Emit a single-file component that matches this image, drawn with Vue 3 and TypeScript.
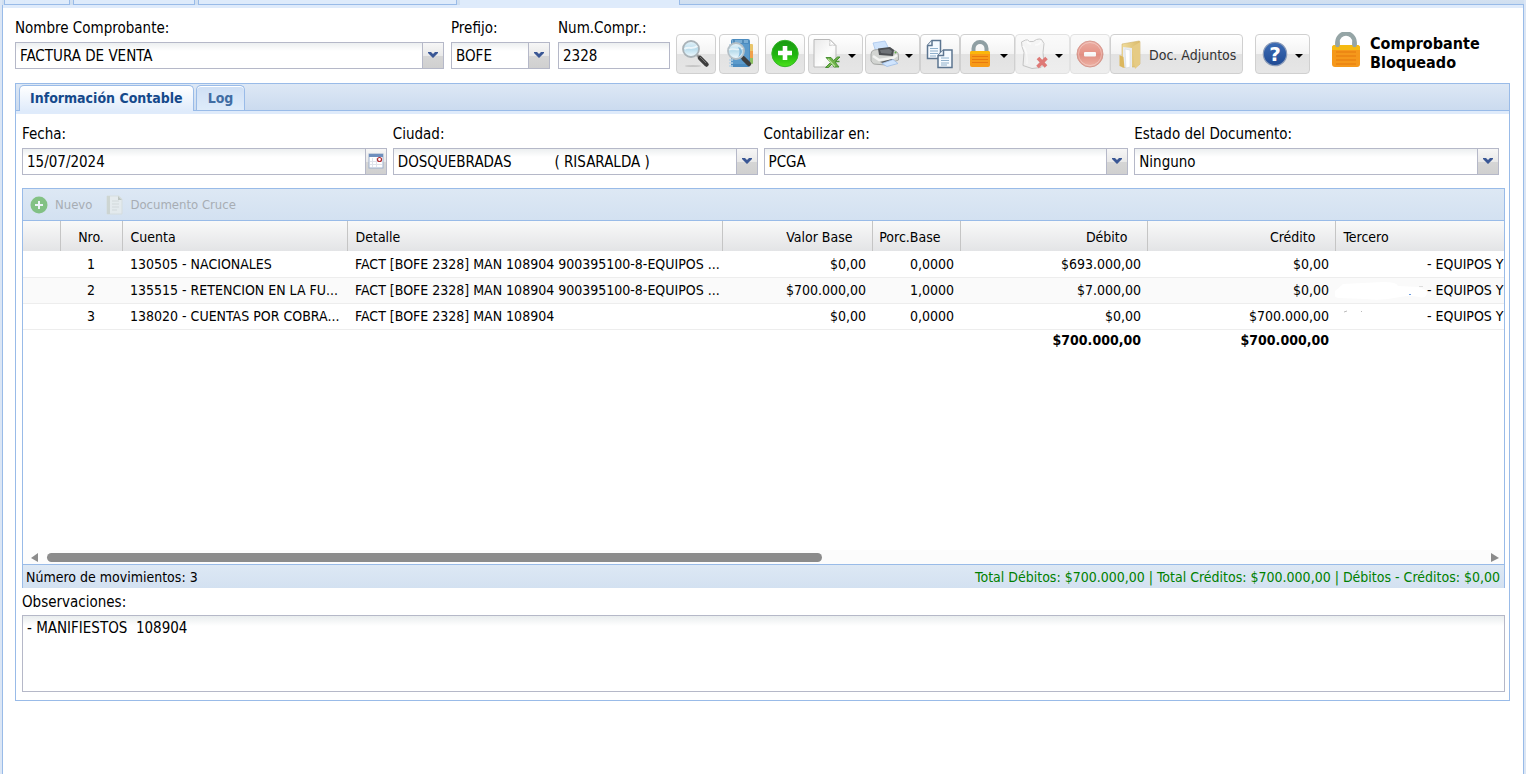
<script setup lang="ts">
import { ref } from 'vue'

interface Movimiento {
  nro: number
  cuenta: string
  detalle: string
  base: string
  porc: string
  debito: string
  credito: string
  tercero: string
}

interface Campo {
  id: string
  label: string
  value: string
}

const movimientos: Movimiento[] = [
  { nro: 1, cuenta: '130505 - NACIONALES', detalle: 'FACT [BOFE 2328] MAN 108904 900395100-8-EQUIPOS ...', base: '$0,00', porc: '0,0000', debito: '$693.000,00', credito: '$0,00', tercero: '- EQUIPOS Y' },
  { nro: 2, cuenta: '135515 - RETENCION EN LA FU...', detalle: 'FACT [BOFE 2328] MAN 108904 900395100-8-EQUIPOS ...', base: '$700.000,00', porc: '1,0000', debito: '$7.000,00', credito: '$0,00', tercero: '- EQUIPOS Y' },
  { nro: 3, cuenta: '138020 - CUENTAS POR COBRA...', detalle: 'FACT [BOFE 2328] MAN 108904', base: '$0,00', porc: '0,0000', debito: '$0,00', credito: '$700.000,00', tercero: '- EQUIPOS Y' },
]

const listas: Campo[] = [
  { id: 'ciudad', label: 'Ciudad:', value: 'DOSQUEBRADAS' + '\u00a0'.repeat(10) + '( RISARALDA )' },
  { id: 'contabilizar', label: 'Contabilizar en:', value: 'PCGA' },
  { id: 'estado', label: 'Estado del Documento:', value: 'Ninguno' },
]

const numero = ref('2328')
const fecha = ref('15/07/2024')
const observaciones = ref('- MANIFIESTOS  108904')
</script>

<template>
  <div class="page">
    <div class="outer-tabs" aria-hidden="true">
      <i class="ot a"></i><i class="ot b"></i><i class="ot c"></i><i class="ot on"></i><i class="ot rest"></i>
    </div>
    <main class="sheet">
      <header class="head">
        <div class="field grow">
          <label for="nombre">Nombre Comprobante:</label>
          <div class="combo">
            <select id="nombre"><option>FACTURA DE VENTA</option></select>
            <span class="trigger"><svg width="12" height="8" viewBox="0 0 12 8"><path d="M1 1h3l2 2 2-2h3v1L6 7 1 2z" fill="#3a5795" /></svg></span>
          </div>
        </div>
        <div class="field prefijo">
          <label for="prefijo">Prefijo:</label>
          <div class="combo">
            <select id="prefijo"><option>BOFE</option></select>
            <span class="trigger"><svg width="12" height="8" viewBox="0 0 12 8"><path d="M1 1h3l2 2 2-2h3v1L6 7 1 2z" fill="#3a5795" /></svg></span>
          </div>
        </div>
        <div class="field numero">
          <label for="numero">Num.Compr.:</label>
          <input id="numero" v-model="numero" class="box" type="text" />
        </div>

        <div class="tools">
          <button type="button" class="tool g3" aria-label="Buscar">
            <svg width="32" height="32" viewBox="0 0 32 32">
              <defs>
                <linearGradient id="lens" x1="0" y1="0" x2="0" y2="1"><stop offset="0" stop-color="#e8f5fb" /><stop offset=".5" stop-color="#b9dcec" /><stop offset="1" stop-color="#f2fbff" /></linearGradient>
              </defs>
              <ellipse cx="13" cy="28" rx="8" ry="1" fill="#000" opacity=".13" />
              <path d="M17 17l3 3" stroke="#999" stroke-width="2.500" />
              <path d="M20 20l6.500 6.500" stroke="#3d3d3d" stroke-width="4.500" stroke-linecap="round" />
              <path d="M20 19l6 6" stroke="#777" stroke-width="1" />
              <circle cx="11" cy="11" r="8" fill="url(#lens)" stroke="#a9b2b7" stroke-width="1.800" />
              <path d="M4.500 11c3-3 8 1 13-3" stroke="#fff" stroke-width="2" fill="none" opacity=".7" />
            </svg>
          </button>
          <button type="button" class="tool g6" aria-label="Buscar en libro">
            <svg width="32" height="32" viewBox="0 0 32 32">
              <path d="M25 6h4q1 0 1 1v6h-5z" fill="#e9c56a" /><path d="M25 13h5v7h-5z" fill="#f0a04a" /><path d="M25 20h5v5q0 1-1 1h-4z" fill="#8dc063" />
              <path d="M8 3q0-2 2-2h15q2 0 2 2v24q0 2-2 2H8z" fill="#4c8cc0" />
              <path d="M9 2h16v3H9z" fill="#79aed6" /><path d="M8 6h18v20H8z" fill="#5b9acb" />
              <path d="M11 2v3M20 2v3" stroke="#2f6b9c" />
              <path d="M6 22h4M6 25h4M6 28h4M6 7h3" stroke="#b9d2e5" stroke-width="1.500" />
              <path d="M18 18l2 2" stroke="#999" stroke-width="2.500" />
              <path d="M20.500 20.500l5.500 5.500" stroke="#3d3d3d" stroke-width="4.500" stroke-linecap="round" />
              <circle cx="13" cy="13" r="8" fill="url(#lens)" stroke="#b4bfc6" stroke-width="1.800" />
              <path d="M6 12c4-3 9 2 14-2" stroke="#fff" stroke-width="1.500" fill="none" opacity=".6" />
              <path d="M15 9q4 1 4 5-1 4-4 5 3-5 0-10" fill="#82b8dc" />
            </svg>
          </button>
          <button type="button" class="tool g3" aria-label="Agregar">
            <svg width="32" height="32" viewBox="0 0 32 32">
              <defs><linearGradient id="gr" x1="0" y1="0" x2="0" y2="1"><stop offset="0" stop-color="#1a9a12" /><stop offset=".55" stop-color="#1fb50f" /><stop offset="1" stop-color="#4be31b" /></linearGradient></defs>
              <circle cx="16" cy="15.500" r="13.200" fill="url(#gr)" stroke="#36b52a" stroke-width="1" />
              <path d="M16 8v14M9 15h14" stroke="#fff" stroke-width="4.600" />
            </svg>
          </button>
          <button type="button" class="tool split g2" aria-label="Exportar a Excel">
            <svg width="32" height="32" viewBox="0 0 32 32">
              <defs><linearGradient id="pg" x1="0" y1="0" x2="1" y2="1"><stop offset="0" stop-color="#e9e9e9" /><stop offset=".6" stop-color="#fdfdfd" /><stop offset="1" stop-color="#e4e4e4" /></linearGradient></defs>
              <path d="M2 1.500h16l6 6V29H2z" fill="url(#pg)" stroke="#b9b9b9" />
              <path d="M17.500 1.500q1 3 0 6 3-1 6 0z" fill="#fff" stroke="#c2c2c2" stroke-width=".8" />
              <path d="M14 19.500h5l2.500 3 4-3.500h2.500l-5 5 4 5h-5l-2-3-3.500 3.500H13.500l5-5z" fill="#70b34a" stroke="#3f8a2a" stroke-width=".9" />
              <path d="M16 21l7 7.500" stroke="#b9e29c" stroke-width="1.200" />
              <path d="M23 23.500h4.500" stroke="#4a9430" stroke-width="1.500" />
            </svg>
            <i class="arrow"></i>
          </button>
          <button type="button" class="tool split" aria-label="Imprimir">
            <svg width="32" height="32" viewBox="0 0 32 32">
              <ellipse cx="16" cy="25" rx="12" ry="2" fill="#000" opacity=".12" />
              <path d="M4 5l12-2 4 8-13 3z" fill="#cfe3fb" stroke="#a9c6ec" stroke-width=".8" />
              <path d="M2 16q0-3 3-4l16-2 7 4q1.500 1 1.500 4v4l-13 5-12-1-2.500-3z" fill="#d3d5d2" stroke="#999c99" stroke-width=".8" />
              <path d="M9 10.500l12-1.500 4 3-1 6-14-1z" fill="#4d5053" /><path d="M11 12l9-1 3 2-1 3-10-1z" fill="#707478" />
              <path d="M4 18l6 4 14-2 4-3" fill="none" stroke="#f3f4f2" stroke-width="2.500" />
              <circle cx="26.500" cy="14.500" r="1" fill="#5ea945" />
              <path d="M11 24l12-3 2 1-11 3z" fill="#55585a" />
              <path d="M13 25.500l11-4 5 4-11 3z" fill="#cfe4fd" stroke="#9dbde6" stroke-width=".8" />
            </svg>
            <i class="arrow"></i>
          </button>
          <button type="button" class="tool" aria-label="Copiar">
            <svg width="32" height="32" viewBox="0 0 32 32">
              <g fill="#f5faff" stroke="#5c7590" stroke-width="1.500">
                <path d="M8 2.500h8.500v18h-13V7.500z" /><path d="M8 2.500v5H3.500" />
                <path d="M19.500 12H28v17.500H14V17.500z" /><path d="M19.500 12v5.500H14" />
              </g>
              <path d="M6 10.500h8M6 13h8M6 15.500h8M6 18h6M17 20h8M17 22.500h8M17 25h8M17 27h6" stroke="#8fb0cc" stroke-width="1.200" />
            </svg>
          </button>
          <button type="button" class="tool split" aria-label="Bloquear">
            <svg width="32" height="32" viewBox="0 0 32 32">
              <path d="M9.500 15v-4.500a6.500 6.500 0 0 1 13 0V15" fill="none" stroke="#8f9fa3" stroke-width="4" />
              <rect x="6" y="13" width="20" height="16" rx="2" fill="#f79b18" />
              <path d="M8 13h16q2 0 2 2v1H6v-1q0-2 2-2z" fill="#fbb70c" />
              <path d="M8 18.500h16M8 21.500h16M8 24.500h16" stroke="#e8790f" stroke-width="1" />
            </svg>
            <i class="arrow"></i>
          </button>
          <button type="button" class="tool split off" aria-label="Anular">
            <svg width="32" height="32" viewBox="0 0 32 32">
              <path d="M2.500 4l4-2q2-1 4 1.500 4 1 7-2 3-1 5 0l2.500 4-1 9 1 12-3 3-9 1-9-3 1-13-2-6z" fill="#f3f3f3" stroke="#a2a2a2" />
              <path d="M8 3q1 3 4 3M22 3q-1 4-6 4M4 8q5 6 4 18" fill="none" stroke="#fff" stroke-width="1.500" />
              <path d="M19 20l8 8.500M27.500 20l-9 9" stroke="#d41c16" stroke-width="3.600" />
            </svg>
            <i class="arrow"></i>
          </button>
          <button type="button" class="tool off" aria-label="Eliminar">
            <svg width="32" height="32" viewBox="0 0 32 32">
              <defs><linearGradient id="rd" x1="0" y1="0" x2="0" y2="1"><stop offset="0" stop-color="#e2705c" /><stop offset=".5" stop-color="#d8432d" /><stop offset="1" stop-color="#f08068" /></linearGradient></defs>
              <circle cx="16" cy="16" r="13" fill="url(#rd)" stroke="#bd5240" /><circle cx="16" cy="16" r="11.500" fill="none" stroke="#fff" opacity=".35" />
              <rect x="10" y="14" width="12" height="4.500" rx="1" fill="#fff" />
            </svg>
          </button>
          <button type="button" class="tool g12">
            <svg width="32" height="32" viewBox="0 0 32 32">
              <defs><linearGradient id="fo" x1="0" y1="0" x2="1" y2="0"><stop offset="0" stop-color="#f0dc9c" /><stop offset="1" stop-color="#d9b968" /></linearGradient></defs>
              <path d="M8 6l17-3q1 0 1 1v22l-4 3H8z" fill="url(#fo)" stroke="#d0b46c" stroke-width=".6" />
              <path d="M9 9l9 1v20l-9-1z" fill="#e9ecf0" /><path d="M11 11l5 1v17l-4 1z" fill="#fff" stroke="#cdd3da" stroke-width=".5" />
              <path d="M18 9l8-5v22l-5 5z" fill="#e6cb84" />
              <path d="M5.500 17l4 2 1 11-5-2z" fill="#dcb75e" />
            </svg>
            <span class="txt">Doc. Adjuntos</span>
          </button>
          <button type="button" class="tool split" aria-label="Ayuda">
            <svg width="32" height="32" viewBox="0 0 32 32">
              <defs><linearGradient id="bl" x1="0" y1="0" x2="0" y2="1"><stop offset="0" stop-color="#3d6db5" /><stop offset="1" stop-color="#1f4a94" /></linearGradient></defs>
              <circle cx="16" cy="16" r="11.700" fill="url(#bl)" stroke="#8a9bb8" stroke-width="1.200" />
              <text x="16" y="23" text-anchor="middle" class="qm">?</text>
            </svg>
            <i class="arrow"></i>
          </button>
        </div>

        <div class="state">
          <svg width="30" height="38" viewBox="0 0 30 38">
            <path d="M6.500 16v-6a8.500 8.500 0 0 1 17 0v6" fill="none" stroke="#95a5a6" stroke-width="4.500" />
            <rect x="1" y="13" width="28" height="22" rx="3" fill="#f5981b" />
            <path d="M4 13h22q3 0 3 3v2H1v-2q0-3 3-3z" fill="#f5ba12" />
            <path d="M5 20h20M5 24h20M5 28h20M5 32h20" stroke="#e5780f" stroke-width="1" />
            <path d="M6.500 11v2M23.500 11v2" stroke="#95a5a6" stroke-width="4.500" stroke-linecap="round" />
          </svg>
          <strong>Comprobante<br />Bloqueado</strong>
        </div>
      </header>

      <section class="panel">
        <div class="tabs" role="tablist">
          <button type="button" role="tab" aria-selected="true" class="tab on">Información Contable</button>
          <button type="button" role="tab" aria-selected="false" class="tab">Log</button>
        </div>
        <div class="body">
          <div class="fields">
            <div class="field">
              <label for="fecha">Fecha:</label>
              <div class="combo">
                <input id="fecha" v-model="fecha" class="box" type="text" />
                <button type="button" class="trigger" aria-label="Abrir calendario">
                  <svg width="16" height="16" viewBox="0 0 16 16">
                    <rect x="1" y="1" width="14" height="14" fill="#fff" stroke="#9db0cc" /><path d="M1 1h14v3H1z" fill="#6f8fbd" />
                    <path d="M4.500 5v9M8.500 5v9M2 8.500h12M2 11.500h12" stroke="#dfe3ea" />
                    <circle cx="11.500" cy="6.500" r="2" fill="#fff" stroke="#b3282d" stroke-width="1.200" />
                  </svg>
                </button>
              </div>
            </div>
            <div v-for="c in listas" :key="c.id" class="field">
              <label :for="c.id">{{ c.label }}</label>
              <div class="combo">
                <select :id="c.id"><option>{{ c.value }}</option></select>
                <span class="trigger"><svg width="12" height="8" viewBox="0 0 12 8"><path d="M1 1h3l2 2 2-2h3v1L6 7 1 2z" fill="#3a5795" /></svg></span>
              </div>
            </div>
          </div>

          <div class="grid">
            <div class="bar">
              <button type="button" class="mini" disabled>
                <svg width="18" height="18" viewBox="0 0 18 18"><circle cx="9" cy="9" r="8.500" fill="#3da52b" /><path d="M9 5v8M5 9h8" stroke="#fff" stroke-width="2" /></svg>
                Nuevo
              </button>
              <button type="button" class="mini doc" disabled>
                <svg width="18" height="20" viewBox="0 0 18 20"><path d="M1 1h12l3 3v15H1z" fill="#eef0ea" stroke="#d5d9d0" /><path d="M1 1h3v18H1z" fill="#c5c9b8" /><path d="M6 6h7M6 9h7M6 12h7M6 15h5" stroke="#cdd0c8" /><path d="M12 1v4h4" fill="#a8ad9b" /></svg>
                Documento Cruce
              </button>
            </div>
            <div class="view">
              <table>
                <colgroup>
                  <col class="w0" /><col class="w1" /><col class="w2" /><col class="w3" /><col class="w4" /><col class="w5" /><col class="w6" /><col class="w7" /><col />
                </colgroup>
                <thead>
                  <tr>
                    <th></th><th class="mid">Nro.</th><th>Cuenta</th><th>Detalle</th><th class="num">Valor Base</th><th class="num">Porc.Base</th><th class="num">Débito</th><th class="num">Crédito</th><th>Tercero</th>
                  </tr>
                </thead>
                <tbody>
                  <tr v-for="m in movimientos" :key="m.nro">
                    <td></td>
                    <td class="mid">{{ m.nro }}</td>
                    <td>{{ m.cuenta }}</td>
                    <td>{{ m.detalle }}</td>
                    <td class="num">{{ m.base }}</td>
                    <td class="num">{{ m.porc }}</td>
                    <td class="num">{{ m.debito }}</td>
                    <td class="num">{{ m.credito }}</td>
                    <td class="ter">
                      <div>
                        <svg width="92" height="22" viewBox="0 0 92 22" aria-hidden="true">
                          <template v-if="m.nro === 2">
                            <path d="M0 12q4-3 8-7 20-1 40-2 14 0 15 4l20 1q9 2 9 6-1 6-8 4-8-2-19 0-18 4-34 2l-28-1q-5-1-3-7z" fill="#fff" />
                            <path d="M74 15.500h2" stroke="#6a9be0" /><path d="M84 7.500h4" stroke="#ddd" />
                          </template>
                          <path v-if="m.nro === 3" d="M9 7l3-1M26 6.500h1" stroke="#bbb" />
                        </svg>
                        {{ m.tercero }}
                      </div>
                    </td>
                  </tr>
                </tbody>
                <tfoot>
                  <tr><td colspan="6"></td><td class="num">$700.000,00</td><td class="num">$700.000,00</td><td></td></tr>
                </tfoot>
              </table>
            </div>
            <div class="scroll" aria-hidden="true">
              <svg width="8" height="10" viewBox="0 0 8 10"><path d="M7 0v9L0 5z" fill="#8b8b8b" /></svg>
              <div class="track"><div class="thumb"></div></div>
              <svg width="8" height="10" viewBox="0 0 8 10"><path d="M0 0v9l8-4z" fill="#8b8b8b" /></svg>
            </div>
            <div class="status">
              <span>Número de movimientos: 3</span>
              <span class="totals">Total Débitos: $700.000,00 | Total Créditos: $700.000,00 | Débitos - Créditos: $0,00</span>
            </div>
          </div>

          <label class="obs" for="obs">Observaciones:</label>
          <textarea id="obs" v-model="observaciones"></textarea>
        </div>
      </section>
    </main>
  </div>
</template>

<style>
body { margin: 0; background: #fff; }
</style>

<style scoped>
* { box-sizing: border-box; }
.page, .page button, .page input, .page select, .page textarea {
  font-family: "DejaVu Sans Condensed", "Noto Sans", sans-serif;
  font-size: 14px;
  color: #000;
}
.page input, .page select, .page textarea, .field label, .obs { font-size: 15px; }
.page { min-height: 100vh; padding: 0 2px; background: #dbe6f5; display: flex; flex-direction: column; overflow: hidden; }
.outer-tabs { display: flex; height: 5px; background: linear-gradient(#d3e1f1, #cedef0); }
.ot { border-bottom: 1px solid #99bbe8; }
.ot.a, .ot.b, .ot.c { background: #deebfb; border-left: 1px solid #99bbe8; border-right: 1px solid #99bbe8; margin-right: 3px; }
.ot.a { width: 66px; margin-left: 2px; }
.ot.b { width: 122px; }
.ot.c { width: 259px; }
.ot.on { width: 219px; background: #deebfb; border-bottom-color: #deebfb; }
.ot.rest { flex: 1; border-left: 1px solid #99bbe8; }
.sheet { flex: 1; background: #fff; border: solid #99bbe8; border-width: 0 1px; box-shadow: inset 0 3px #dfebfb; padding: 13px 13px 24px 12px; }
.head { display: flex; align-items: flex-start; }
.field { display: flex; flex-direction: column; min-width: 0; }
.field label { line-height: 20px; margin-bottom: 4px; white-space: nowrap; }
.grow { flex: 1; }
.prefijo { width: 99px; margin-left: 7px; }
.numero { width: 112px; margin: 0 6px 0 8px; }
.combo { position: relative; display: flex; }
.combo .box, select, .numero .box {
  appearance: none;
  width: 100%;
  height: 27px;
  margin: 0;
  padding: 1px 24px 0 4px;
  border: 1px solid #b5b8c8;
  border-radius: 0;
  outline: 0;
  background: linear-gradient(#eceff0, #fff 8px);
}
.trigger { position: absolute; right: 0; top: 0; bottom: 0; width: 22px; padding: 0; border: 1px solid #b5b8c8; background: linear-gradient(#f6f6f6, #e9e9e9 50%, #d6d6d6 51%, #d0d0d0); display: flex; align-items: center; justify-content: center; pointer-events: none; }
.trigger svg { margin-bottom: 2px; }
.tools { display: flex; margin-top: 16px; }
.tool { height: 40px; padding: 3px; border: 1px solid #d0d0d0; border-radius: 4px; background: linear-gradient(#fff, #f3f3f3 50%, #e2e2e2 51%, #e6e6e6); display: flex; align-items: center; white-space: nowrap; }
.tool svg { flex: none; }
.tool.split { padding-right: 6px; }
.g2 { margin-right: 2px; }
.g3 { margin-right: 3px; }
.g6 { margin-right: 6px; }
.g12 { margin-right: 12px; }
.off { border-color: #e2e2e2; background: linear-gradient(#fafafa, #f5f5f5 50%, #ebebeb 51%, #eee); }
.off svg { opacity: .55; }
.arrow { border: 4px solid transparent; border-top-color: #000; border-bottom: 0; margin-left: 4px; margin-top: 3px; }
.txt { width: 86px; margin: 2px 4px 0 3px; color: #333; text-align: left; }
.qm { font: bold 20px "DejaVu Sans", sans-serif; fill: #fff; }
.state { display: flex; flex: none; gap: 9px; width: 179px; margin-left: 21px; padding-top: 14px; }
.state svg { flex: none; }
.state strong { font-size: 16px; line-height: 19px; padding-top: 2px; }

.panel { margin-top: 9px; border: 1px solid #99bbe8; }
.tabs { height: 27px; display: flex; gap: 2px; padding: 1px 3px 0; background: linear-gradient(#dde8f5, #cbdbef); border-bottom: 1px solid #99bbe8; }
.page .tab { height: 25px; padding: 0 11px; border: 1px solid #99bbe8; border-bottom: 0; border-radius: 5px 5px 0 0; background: linear-gradient(#cfdff5, #deebfa); box-shadow: inset 0 1px #fff; color: #416da3; font-weight: bold; }
.page .tab.on { height: 26px; padding: 0 10px 1px; background: linear-gradient(#fff, #dfebfb); color: #15498b; }
.body { box-shadow: inset 0 3px #dfebfb; padding: 13px 4px 8px 6px; }
.fields { display: grid; grid-template-columns: repeat(4, minmax(0, 1fr)); gap: 6px; padding-right: 6px; }
.grid { margin-top: 13px; border: 1px solid #99bbe8; border-bottom: 0; }
.bar { height: 32px; display: flex; align-items: center; padding-left: 7px; background: linear-gradient(#dde8f4, #d3e1f1); border-bottom: 1px solid #99bbe8; }
.page .mini { display: flex; align-items: center; gap: 7px; padding: 0; border: 0; background: none; opacity: .55; color: #808080; font-size: 13px; }
.page .mini.doc { margin-left: 14px; gap: 6px; }
.view { min-height: 329px; overflow: hidden; }
table { width: 100%; table-layout: fixed; border-collapse: collapse; line-height: 18px; }
.w0 { width: 37px; } .w1 { width: 62px; } .w2 { width: 225px; } .w3 { width: 375px; } .w4 { width: 150px; } .w5 { width: 88px; } .w6 { width: 187px; } .w7 { width: 188px; }
thead tr { background: linear-gradient(#f9f9f9, #e3e4e6); }
th { height: 30px; padding: 2px 8px 0; border-right: 1px solid #c5c5c5; font-weight: normal; text-align: left; white-space: nowrap; }
th:last-child { border-right: 0; }
td { height: 26px; padding: 0 0 0 8px; white-space: nowrap; overflow: hidden; }
tbody tr { height: 26px; border-bottom: 1px solid #ededed; }
tbody tr:nth-child(2) { background: #fafafa; }
td.mid, th.mid { text-align: center; padding-left: 0; padding-right: 0; }
td.num { text-align: right; padding-right: 6px; }
th.num { text-align: right; padding: 2px 19px 0 0; }
td.ter { padding: 0; }
.ter div { display: flex; align-items: center; overflow: hidden; height: 22px; }
.ter svg { flex: none; }
tfoot td { height: 22px; font-weight: bold; }
.scroll { height: 14px; display: flex; align-items: center; padding: 1px 5px 0 8px; background: #fcfcfc; }
.track { flex: 1; margin: 0 8px; }
.thumb { width: 54%; height: 9px; border-radius: 5px; background: #8b8b8b; }
.status { display: flex; justify-content: space-between; height: 24px; line-height: 24px; padding: 0 4px 0 3px; border-top: 1px solid #99bbe8; background: linear-gradient(#dde8f4, #d3e1f1); white-space: nowrap; }
.totals { color: #008000; }
.obs { display: block; line-height: 20px; margin: 4px 0 3px; }
textarea { display: block; width: 100%; height: 77px; margin: 0; padding: 3px 4px; border: 1px solid #b5b8c8; outline: 0; resize: none; line-height: 18px; background: linear-gradient(#e9edee, #fff 10px); }
</style>
